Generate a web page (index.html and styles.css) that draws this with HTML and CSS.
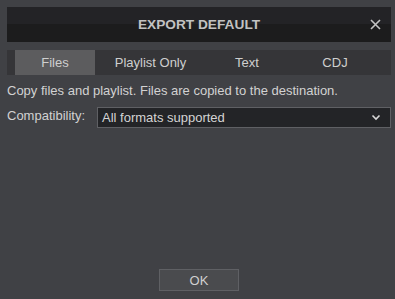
FILE: index.html
```html
<!DOCTYPE html>
<html lang="en">
<head>
<meta charset="UTF-8" />
<title>Export Default</title>
<link rel="stylesheet" href="styles.css">
</head>
<body>
  <div id="dialog">
    <div id="titlebar">
      <span class="title">EXPORT DEFAULT</span>
      <svg class="close" width="11" height="11" viewBox="0 0 11 11"><path d="M1 1L10 10M10 1L1 10" stroke="#c4c4c4" stroke-width="1.6" fill="none"/></svg>
    </div>
    <div id="tabs">
      <div class="tab t-files active">Files</div>
      <div class="tab t-playlist">Playlist Only</div>
      <div class="tab t-text">Text</div>
      <div class="tab t-cdj">CDJ</div>
    </div>
    <p class="desc">Copy files and playlist. Files are copied to the destination.</p>
    <div class="row">
      <label>Compatibility:</label>
      <div class="select">
        <span>All formats supported</span>
        <svg width="10" height="7" viewBox="0 0 10 7"><path d="M1.5 1.5L5 5L8.5 1.5" stroke="#d8d8d8" stroke-width="1.6" fill="none"/></svg>
      </div>
    </div>
    <div class="footer">
      <button id="ok">OK</button>
    </div>
  </div>
</body>
</html>
```
FILE: styles.css
```css
html,body{margin:0;padding:0;}
body{background:#404145;font-family:"Liberation Sans",Arial,sans-serif;font-size:13px;color:#d2d2d2;width:395px;height:299px;overflow:hidden;}
#dialog{display:flex;flex-direction:column;height:299px;padding:7px 4px 0 7px;box-sizing:border-box;}
#titlebar{height:35px;background:linear-gradient(#232326 0,#232326 50%,#1c1c1d 50%,#1c1c1d 100%);display:flex;align-items:center;justify-content:center;position:relative;}
.title{font-weight:bold;color:#c2c2c2;font-size:13.7px;}
.close{position:absolute;left:363px;top:12px;}
#tabs{margin-top:8px;height:25px;background:#353538;display:flex;padding-left:8px;}
.tab{display:flex;align-items:center;justify-content:center;color:#cfcfcf;}
.tab.active{background:#5c5c5e;}
.t-files{width:80px;}
.t-playlist{width:111px;}
.t-text{width:82px;}
.t-cdj{width:94px;}
.desc{margin:8px 0 0;line-height:16px;}
.row{display:flex;align-items:center;margin-top:8px;}
label{width:90px;line-height:16px;margin-top:-3px;}
.select{flex:1;height:21px;box-sizing:border-box;border:1px solid #5f6064;background:#232427;display:flex;align-items:center;justify-content:space-between;padding:0 9px 0 4px;color:#d4d4d4;}
.footer{margin-top:auto;display:flex;justify-content:center;padding:0 0 8px;}
#ok{width:80px;height:22px;background:#4a4b4e;border:1px solid #5f6064;color:#d0d0d0;font-family:"Liberation Sans",Arial,sans-serif;font-size:13px;padding:0;}
```
